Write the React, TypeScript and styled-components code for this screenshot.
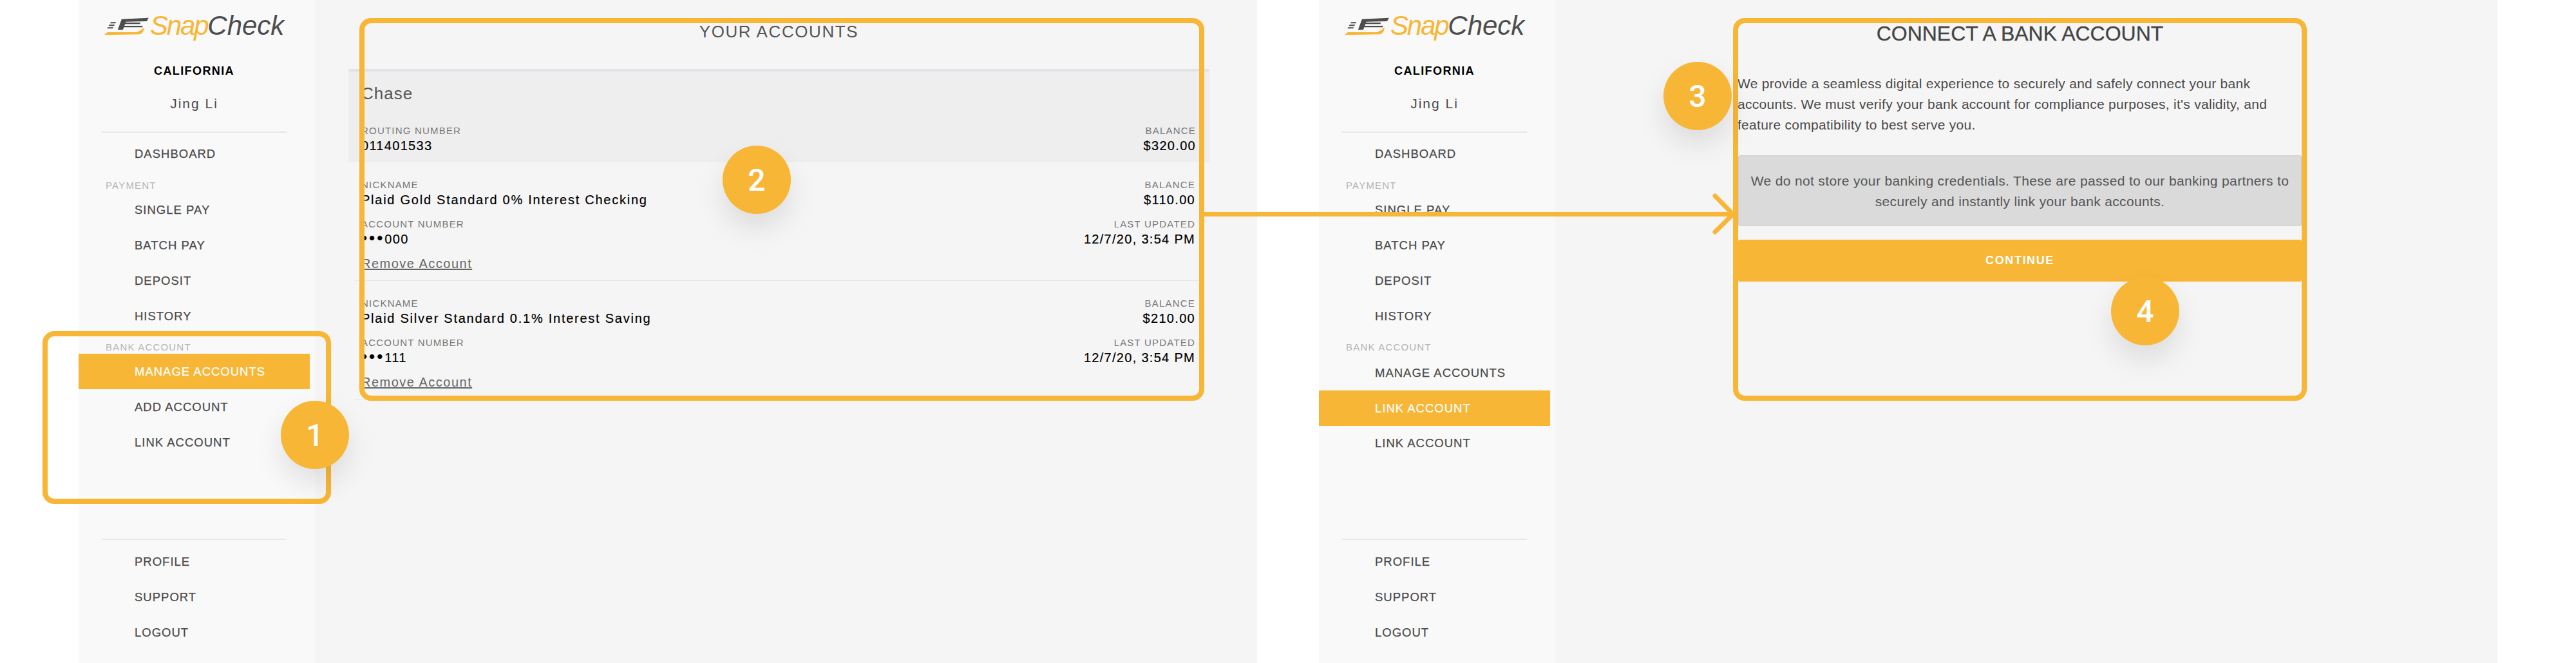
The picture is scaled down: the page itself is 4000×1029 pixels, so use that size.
import React from "react";
import styled, { createGlobalStyle } from "styled-components";

const orange = "#f8b636";

const Global = createGlobalStyle`
  html, body { margin: 0; padding: 0; background: #fff; overflow: hidden; }
  * { box-sizing: border-box; }
  body { font-family: "Liberation Sans", Arial, sans-serif; }
`;

const Page = styled.div`
  position: relative;
  width: 4000px;
  height: 1029px;
  padding-left: 122px;
  display: flex;
  gap: 96px;
  overflow: hidden;
`;

const Screen = styled.section`
  width: 1830px;
  height: 1029px;
  display: flex;
  flex: none;
`;

const Sidebar = styled.aside`
  width: 367px;
  flex: none;
  background: #f9f9f9;
  padding-right: 8px;
  display: flex;
  flex-direction: column;
`;

const LogoRow = styled.div`
  height: 98px;
  padding: 20px 0 0 38px;
  display: flex;
  align-items: flex-start;
`;

const LogoMark = styled.svg`
  width: 72px;
  height: 30px;
  margin: 6px 1px 0 0;
  flex: none;
`;

const LogoWord = styled.span<{ $tone: string; $track: number }>`
  font-size: 42px;
  line-height: 40px;
  font-style: italic;
  color: ${(p) => p.$tone};
  letter-spacing: ${(p) => p.$track}px;
`;

const Region = styled.div`
  font-size: 18px;
  line-height: 24px;
  font-weight: 700;
  letter-spacing: 1.4px;
  color: #000;
  text-align: center;
`;

const UserName = styled.div`
  margin-top: 25px;
  font-size: 21px;
  line-height: 28px;
  letter-spacing: 2px;
  color: #4a4a4a;
  text-align: center;
`;

const Divider = styled.hr<{ $top: number }>`
  width: 287px;
  height: 2px;
  border: 0;
  margin: ${(p) => p.$top}px auto 0 36px;
  background: #e8e8e8;
`;

const Nav = styled.nav`
  padding-top: 5.5px;
`;

const Footer = styled.nav`
  margin-top: auto;
  padding-bottom: 20px;
  display: flex;
  flex-direction: column;
`;

const FooterRows = styled.div`
  padding-top: 6px;
`;

const Group = styled.div<{ $shift?: number }>`
  padding-top: ${(p) => p.$shift ?? 0}px;
`;

const NavItem = styled.a<{ $active?: boolean; $h?: number }>`
  display: flex;
  align-items: center;
  height: ${(p) => p.$h ?? 55}px;
  padding-left: 87px;
  font-size: 18.5px;
  letter-spacing: 1px;
  -webkit-text-stroke: 0.25px currentColor;
  color: ${(p) => (p.$active ? "#fff" : "#4a4a4a")};
  background: ${(p) => (p.$active ? orange : "transparent")};
`;

const GroupLabel = styled.div<{ $top: number }>`
  margin-top: ${(p) => p.$top}px;
  padding-left: 42px;
  font-size: 15px;
  line-height: 20px;
  letter-spacing: 1.2px;
  color: #b4b4b4;
`;

const Main = styled.main<{ $inset: number; $width: number }>`
  flex: 1;
  background: #f5f5f5;
  padding-left: ${(p) => p.$inset}px;
  > * { width: ${(p) => p.$width}px; }
`;

const AccountsTitle = styled.h1`
  margin: 0;
  height: 107px;
  padding-top: 30px;
  font-size: 26px;
  line-height: 38px;
  font-weight: 400;
  letter-spacing: 1.6px;
  color: #555;
  text-align: center;
`;

const BankHeader = styled.header`
  border-top: 4px solid #e2e3e8;
  background: #eee;
  height: 145px;
  padding: 16px 21px 13px 20px;
`;

const BankName = styled.div`
  height: 36px;
  margin-bottom: 30px;
  font-size: 26px;
  line-height: 36px;
  letter-spacing: 1px;
  color: #555;
`;

const SplitRow = styled.div<{ $gap?: number }>`
  display: flex;
  justify-content: space-between;
  margin-top: ${(p) => p.$gap ?? 0}px;
`;

const Field = styled.div<{ $end?: boolean }>`
  text-align: ${(p) => (p.$end ? "right" : "left")};
`;

const FieldLabel = styled.div`
  font-size: 15px;
  line-height: 20px;
  letter-spacing: 1.2px;
  color: #777;
`;

const FieldValue = styled.div`
  font-size: 20px;
  line-height: 26px;
  letter-spacing: 1.3px;
  -webkit-text-stroke: 0.2px currentColor;
  color: #000;
`;

const AccountName = styled(FieldValue)`
  letter-spacing: 1.75px;
`;

const MaskDots = styled.span`
  font-size: 26px;
  line-height: 20px;
  letter-spacing: 3px;
`;

const AccountRow = styled.article`
  margin: 0 11px;
  padding: 25px 11px 12px 9px;
  border-bottom: 1px solid #e3e6ec;
`;

const RemoveLink = styled.a`
  display: inline-block;
  margin-top: 11px;
  font-size: 20px;
  line-height: 28px;
  letter-spacing: 1.5px;
  color: #666;
  text-decoration: underline;
`;

const ConnectTitle = styled.h1`
  margin: 0;
  padding-top: 32px;
  font-size: 32px;
  line-height: 40px;
  font-weight: 400;
  -webkit-text-stroke: 0.3px currentColor;
  color: #444;
  text-align: center;
`;

const Lead = styled.p`
  margin: 42px 0 31px -1px;
  max-width: 860px;
  font-size: 21px;
  line-height: 32px;
  letter-spacing: 0.28px;
  color: #4a4a4a;
`;

const Notice = styled.div`
  height: 110px;
  padding: 23px 10px;
  border: 1px solid #cfcfcf;
  border-radius: 3px;
  background: #dadada;
  font-size: 21px;
  line-height: 32px;
  letter-spacing: 0.35px;
  color: #555;
  text-align: center;
`;

const ContinueButton = styled.button`
  display: block;
  height: 65px;
  margin-top: 21px;
  border: 0;
  border-radius: 3px;
  background: ${orange};
  color: #fff;
  font-family: inherit;
  font-size: 18px;
  font-weight: 700;
  letter-spacing: 1.6px;
`;

const Highlight = styled.div<{ $x: number; $y: number; $w: number; $h: number }>`
  position: absolute;
  left: ${(p) => p.$x}px;
  top: ${(p) => p.$y}px;
  width: ${(p) => p.$w}px;
  height: ${(p) => p.$h}px;
  border: 8px solid ${orange};
  border-radius: 18px;
`;

const Badge = styled.div<{ $x: number; $y: number }>`
  position: absolute;
  left: ${(p) => p.$x}px;
  top: ${(p) => p.$y}px;
  width: 106px;
  height: 106px;
  border-radius: 50%;
  background: ${orange};
  box-shadow: 0 22px 44px rgba(0, 0, 0, 0.1);
  display: flex;
  align-items: center;
  justify-content: center;
  font-family: Roboto, sans-serif;
  font-size: 48px;
  font-weight: 500;
  color: #fff;
`;

const Arrow = styled.svg`
  position: absolute;
  left: 1868px;
  top: 296px;
  width: 830px;
  height: 72px;
`;

const Logo = () => (
  <LogoRow>
    <LogoMark viewBox="60 75 215 90">
      <path fill="#4d4d4d" d="M128 136 146 86 272 80 263 96 166 98 152 136Z" />
      <path fill="#4d4d4d" d="M160 102h74l-2 7h-74ZM155 117h90l-3 7h-89ZM95 100h25l-3 6H93ZM88 112h26l-3 6H86ZM81 124h27l-3 6H79Z" />
      <path fill={orange} d="M65 160 80 147H214Q236 142 250 124 252 146 232 157L65 160Z" />
    </LogoMark>
    <LogoWord $tone={orange} $track={-2.2}>Snap</LogoWord>
    <LogoWord $tone="#4d4d4d" $track={0}>Check</LogoWord>
  </LogoRow>
);

const SideNav = ({ second }: { second?: boolean }) => (
  <Sidebar>
    <Logo />
    <Region>CALIFORNIA</Region>
    <UserName>Jing Li</UserName>
    <Divider $top={29} />
    <Nav>
      <NavItem>DASHBOARD</NavItem>
      <GroupLabel $top={11.5}>PAYMENT</GroupLabel>
      <Group>
        <NavItem>SINGLE PAY</NavItem>
        <NavItem>BATCH PAY</NavItem>
        <NavItem>DEPOSIT</NavItem>
        <NavItem>HISTORY</NavItem>
      </Group>
      <GroupLabel $top={11}>BANK ACCOUNT</GroupLabel>
      {second ? (
        <Group $shift={3}>
          <NavItem $h={54}>MANAGE ACCOUNTS</NavItem>
          <NavItem $active>LINK ACCOUNT</NavItem>
          <NavItem $h={54}>LINK ACCOUNT</NavItem>
        </Group>
      ) : (
        <Group>
          <NavItem $active>MANAGE ACCOUNTS</NavItem>
          <NavItem>ADD ACCOUNT</NavItem>
          <NavItem>LINK ACCOUNT</NavItem>
        </Group>
      )}
    </Nav>
    <Footer>
      <Divider $top={0} />
      <FooterRows>
        <NavItem>PROFILE</NavItem>
        <NavItem>SUPPORT</NavItem>
        <NavItem>LOGOUT</NavItem>
      </FooterRows>
    </Footer>
  </Sidebar>
);

const accounts = [
  { name: "Plaid Gold Standard 0% Interest Checking", balance: "$110.00", number: "000" },
  { name: "Plaid Silver Standard 0.1% Interest Saving", balance: "$210.00", number: "111" },
];

export default function App() {
  return (
    <Page>
      <Global />
      <Screen>
        <SideNav />
        <Main $inset={52} $width={1337}>
          <AccountsTitle>YOUR ACCOUNTS</AccountsTitle>
          <BankHeader>
            <BankName>Chase</BankName>
            <SplitRow>
              <Field>
                <FieldLabel>ROUTING NUMBER</FieldLabel>
                <FieldValue>011401533</FieldValue>
              </Field>
              <Field $end>
                <FieldLabel>BALANCE</FieldLabel>
                <FieldValue>$320.00</FieldValue>
              </Field>
            </SplitRow>
          </BankHeader>
          <div>
            {accounts.map((a) => (
              <AccountRow key={a.number}>
                <SplitRow>
                  <Field>
                    <FieldLabel>NICKNAME</FieldLabel>
                    <AccountName>{a.name}</AccountName>
                  </Field>
                  <Field $end>
                    <FieldLabel>BALANCE</FieldLabel>
                    <FieldValue>{a.balance}</FieldValue>
                  </Field>
                </SplitRow>
                <SplitRow $gap={15}>
                  <Field>
                    <FieldLabel>ACCOUNT NUMBER</FieldLabel>
                    <FieldValue>
                      <MaskDots>•••</MaskDots>
                      {a.number}
                    </FieldValue>
                  </Field>
                  <Field $end>
                    <FieldLabel>LAST UPDATED</FieldLabel>
                    <FieldValue>12/7/20, 3:54 PM</FieldValue>
                  </Field>
                </SplitRow>
                <RemoveLink>Remove Account</RemoveLink>
              </AccountRow>
            ))}
          </div>
        </Main>
      </Screen>
      <Screen>
        <SideNav second />
        <Main $inset={284} $width={875}>
          <ConnectTitle>CONNECT A BANK ACCOUNT</ConnectTitle>
          <Lead>
            We provide a seamless digital experience to securely and safely connect your bank accounts. We must
            verify your bank account for compliance purposes, it's validity, and feature compatibility to best serve
            you.
          </Lead>
          <Notice>
            We do not store your banking credentials. These are passed to our banking partners to securely and
            instantly link your bank accounts.
          </Notice>
          <ContinueButton>CONTINUE</ContinueButton>
        </Main>
      </Screen>

      <Arrow viewBox="0 0 830 72" fill="none" stroke={orange} strokeWidth="7" strokeLinecap="round" strokeLinejoin="round">
        <path d="M2 36.5H822" strokeLinecap="butt" />
        <path d="M795 8 823 36.5 795 64" />
      </Arrow>
      <Highlight $x={66} $y={514} $w={448} $h={268} />
      <Highlight $x={558} $y={28} $w={1312} $h={594} />
      <Highlight $x={2691} $y={28} $w={891} $h={594} />
      <Badge $x={436} $y={622}>1</Badge>
      <Badge $x={1122} $y={226}>2</Badge>
      <Badge $x={2583} $y={96}>3</Badge>
      <Badge $x={3278} $y={430}>4</Badge>
    </Page>
  );
}
